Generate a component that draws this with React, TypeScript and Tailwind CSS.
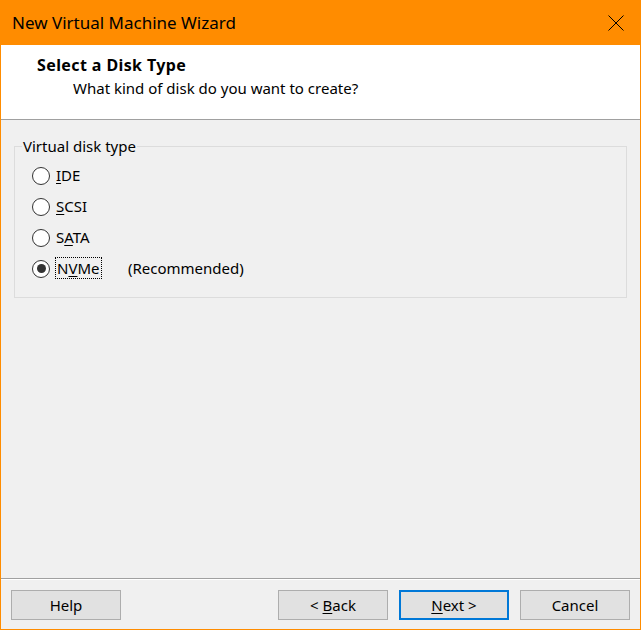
import React from "react";

const font = "font-['Noto_Sans','Liberation_Sans',sans-serif]";

function Radio({ checked }: { checked?: boolean }) {
  return (
    <span className="w-[18px] h-[18px] rounded-full border border-[#333333] bg-white flex items-center justify-center shrink-0">
      {checked && <span className="w-[9px] h-[9px] rounded-full bg-[#333333]" />}
    </span>
  );
}

function Btn({ children, focused }: { children: React.ReactNode; focused?: boolean }) {
  return (
    <button
      className={
        focused
          ? "w-[110px] h-[30px] bg-[#e1e1e1] border-2 border-[#0078d7] text-[15px] text-black"
          : "w-[110px] h-[30px] bg-[#e1e1e1] border border-[#adadad] text-[15px] text-black"
      }
    >
      {children}
    </button>
  );
}

export default function App() {
  const rows = [
    { pre: "", u: "I", post: "DE" },
    { pre: "", u: "S", post: "CSI" },
    { pre: "S", u: "A", post: "TA" },
  ];

  return (
    <div className={`w-[641px] h-[630px] flex flex-col bg-[#f0f0f0] border-x border-b border-[#ff8c00] text-black ${font}`}>
      <div className="h-[45px] bg-[#ff8c00] flex items-center justify-between pl-[11px] pr-[16px] shrink-0">
        <span className="text-[17px]">New Virtual Machine Wizard</span>
        <svg width="16" height="16" viewBox="0 0 16 16">
          <path d="M0.5 0.5 L15.5 15.5 M15.5 0.5 L0.5 15.5" stroke="#000" strokeWidth="1" />
        </svg>
      </div>

      <div className="h-[75px] bg-white border-b border-[#a0a0a0] pt-[10px] shrink-0">
        <div className="pl-[36px] text-[16px] font-bold tracking-[0.4px] leading-[20px]">Select a Disk Type</div>
        <div className="pl-[72px] mt-[3px] text-[15px] leading-[20px]">What kind of disk do you want to create?</div>
      </div>

      <div className="flex-1 pt-[16px] px-[13px]">
        <fieldset className="border border-[#dcdcdc] pl-[17px] pt-[4px] pb-[13px]">
          <legend className="-ml-[10px] text-[15px] leading-[20px] px-[1px]">Virtual disk type</legend>
          {rows.map((r) => (
            <div key={r.u + r.post} className="h-[31px] flex items-center gap-[6px] text-[15px]">
              <Radio />
              <span>
                {r.pre}
                <span className="underline underline-offset-2">{r.u}</span>
                {r.post}
              </span>
            </div>
          ))}
          <div className="h-[31px] flex items-center gap-[6px] text-[15px]">
            <Radio checked />
            <span className="w-[66px] shrink-0">
              <span className="outline-1 outline-dotted outline-black px-[1px]">
                N<span className="underline underline-offset-2">V</span>Me
              </span>
            </span>
            <span>(Recommended)</span>
          </div>
        </fieldset>
      </div>

      <div className="border-t border-[#a0a0a0] shrink-0">
        <div className="border-t border-white h-[50px] pt-[10px] px-[10px] flex">
          <Btn>Help</Btn>
          <div className="flex-1" />
          <div className="flex gap-[11px]">
            <Btn>
              &lt; <span className="underline underline-offset-2">B</span>ack
            </Btn>
            <Btn focused>
              <span className="underline underline-offset-2">N</span>ext &gt;
            </Btn>
            <Btn>Cancel</Btn>
          </div>
        </div>
      </div>
    </div>
  );
}
